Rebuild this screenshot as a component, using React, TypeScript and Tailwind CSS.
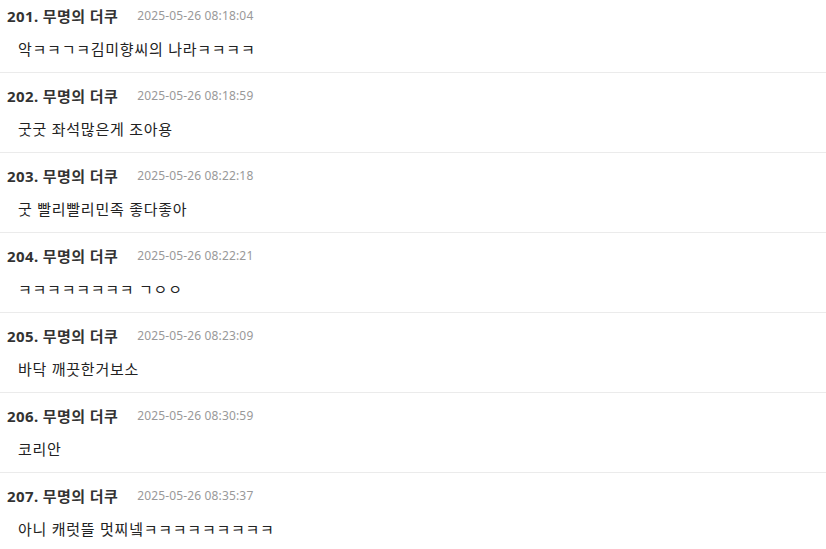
import React from "react";

const items = [
  { n: 201, t: "2025-05-26 08:18:04", c: "악ㅋㅋㄱㅋ김미향씨의 나라ㅋㅋㅋㅋ" },
  { n: 202, t: "2025-05-26 08:18:59", c: "굿굿 좌석많은게 조아용" },
  { n: 203, t: "2025-05-26 08:22:18", c: "굿 빨리빨리민족 좋다좋아" },
  { n: 204, t: "2025-05-26 08:22:21", c: "ㅋㅋㅋㅋㅋㅋㅋㅋ ㄱㅇㅇ" },
  { n: 205, t: "2025-05-26 08:23:09", c: "바닥 깨끗한거보소" },
  { n: 206, t: "2025-05-26 08:30:59", c: "코리안" },
  { n: 207, t: "2025-05-26 08:35:37", c: "아니 캐럿뜰 멋찌넼ㅋㅋㅋㅋㅋㅋㅋㅋㅋ" },
];

export default function App() {
  return (
    <div
      className="w-[826px] h-[549px] overflow-hidden bg-white"
      style={{ fontFamily: '"Noto Sans", "Noto Sans CJK KR", sans-serif' }}
    >
      {items.map((it) => (
        <div
          key={it.n}
          className="pt-[12px] first:pt-[5px] pb-[12px] border-b border-[#ebebeb]"
        >
          <div className="flex items-center h-[22px] pl-[7px]">
            <span className="text-[15px] font-bold text-[#333] leading-[22px] tracking-[0.4px]">
              {it.n}. 무명의 더쿠
            </span>
            <span className="ml-[19px] text-[12px] text-[#999] leading-[22px] tracking-[0.15px]">
              {it.t}
            </span>
          </div>
          <div className="mt-[11px] h-[22px] pl-[18px] text-[15px] text-[#222] leading-[22px] tracking-[0.75px]">
            {it.c}
          </div>
        </div>
      ))}
    </div>
  );
}
